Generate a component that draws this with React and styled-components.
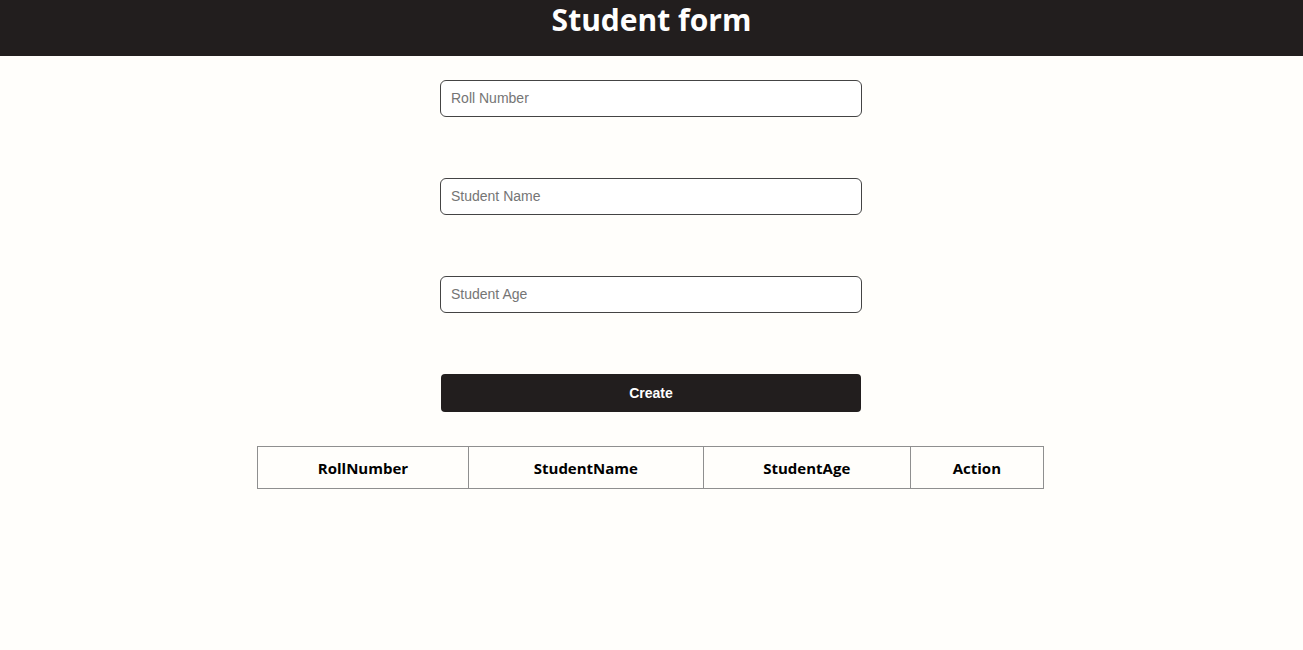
import React, { useState } from 'react'
import styled, { createGlobalStyle } from 'styled-components'

const GlobalStyle = createGlobalStyle`
  body {
    margin: 0;
    background: #fffefb;
    font-family: "Open Sans", "Noto Sans", sans-serif;
  }
`
const Header = styled.header`
  height: 56px;
  background-color: #221e1e;
  display: flex;
  justify-content: center;
`
const Title = styled.h1`
  margin: 0;
  color: #ffffff;
  font-size: 30px;
  font-weight: 700;
  line-height: 40px;
`
const Form = styled.form`
  display: flex;
  flex-direction: column;
  align-items: center;
  gap: 61px;
  padding: 24px 1px 0 0;
`
const Input = styled.input`
  box-sizing: border-box;
  width: 422px;
  height: 37px;
  padding: 0 10px 1px;
  border: 1px solid #444444;
  border-radius: 6px;
  background: #ffffff;
  font-family: "Liberation Sans", Arial, sans-serif;
  font-size: 14px;
  color: #222;
  outline: none;

  &::placeholder {
    color: #757575;
  }
`
const Button = styled.button`
  width: 420px;
  height: 38px;
  border: none;
  border-radius: 4px;
  background-color: #221e1e;
  color: #ffffff;
  font-family: "Liberation Sans", Arial, sans-serif;
  font-size: 14px;
  font-weight: 700;
  cursor: pointer;
`
const TableWrap = styled.div`
  display: flex;
  justify-content: center;
  padding: 34px 2px 0 0;
`
const Table = styled.table`
  border-collapse: collapse;
  width: 787px;
`
const Th = styled.th`
  width: ${props => props.$w}px;
  height: 41px;
  padding: 0;
  border: 1px solid #8f8f8f;
  font-size: 15px;
  font-weight: 700;
  color: #000;
  text-align: center;
`

const columns = [
  { label: 'RollNumber', w: 211 },
  { label: 'StudentName', w: 235 },
  { label: 'StudentAge', w: 207 },
  { label: 'Action', w: 133 },
]

const App = () => {
  const [form, setForm] = useState({ roll: '', name: '', age: '' })
  const change = (key) => (e) => setForm({ ...form, [key]: e.target.value })

  return (
    <>
      <GlobalStyle />
      <Header>
        <Title>Student form</Title>
      </Header>
      <Form onSubmit={(e) => e.preventDefault()}>
        <Input placeholder="Roll Number" value={form.roll} onChange={change('roll')} />
        <Input placeholder="Student Name" value={form.name} onChange={change('name')} />
        <Input placeholder="Student Age" value={form.age} onChange={change('age')} />
        <Button type="submit">Create</Button>
      </Form>
      <TableWrap>
        <Table>
          <thead>
            <tr>
              {columns.map(c => <Th key={c.label} $w={c.w}>{c.label}</Th>)}
            </tr>
          </thead>
        </Table>
      </TableWrap>
    </>
  )
}

export default App
